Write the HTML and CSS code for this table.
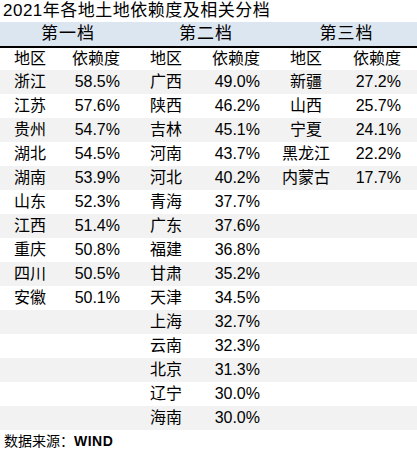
FILE: index.html
```html
<!DOCTYPE html>
<html lang="zh">
<head>
<meta charset="utf-8">
<link rel="stylesheet" href="styles.css">
</head>
<body>
<div class="page">
  <div class="title">2021年各地土地依赖度及相关分档</div>
  <div class="band">
    <div>第一档</div>
    <div>第二档</div>
    <div>第三档</div>
  </div>
  <div class="table">
    <div class="row head"><span class="n">地区</span><span class="v">依赖度</span><span class="n">地区</span><span class="v">依赖度</span><span class="n">地区</span><span class="v">依赖度</span></div>
    <div class="row"><span class="n">浙江</span><span class="v">58.5%</span><span class="n">广西</span><span class="v">49.0%</span><span class="n">新疆</span><span class="v">27.2%</span></div>
    <div class="row"><span class="n">江苏</span><span class="v">57.6%</span><span class="n">陕西</span><span class="v">46.2%</span><span class="n">山西</span><span class="v">25.7%</span></div>
    <div class="row"><span class="n">贵州</span><span class="v">54.7%</span><span class="n">吉林</span><span class="v">45.1%</span><span class="n">宁夏</span><span class="v">24.1%</span></div>
    <div class="row"><span class="n">湖北</span><span class="v">54.5%</span><span class="n">河南</span><span class="v">43.7%</span><span class="n">黑龙江</span><span class="v">22.2%</span></div>
    <div class="row"><span class="n">湖南</span><span class="v">53.9%</span><span class="n">河北</span><span class="v">40.2%</span><span class="n">内蒙古</span><span class="v">17.7%</span></div>
    <div class="row"><span class="n">山东</span><span class="v">52.3%</span><span class="n">青海</span><span class="v">37.7%</span><span class="n"></span><span class="v"></span></div>
    <div class="row"><span class="n">江西</span><span class="v">51.4%</span><span class="n">广东</span><span class="v">37.6%</span><span class="n"></span><span class="v"></span></div>
    <div class="row"><span class="n">重庆</span><span class="v">50.8%</span><span class="n">福建</span><span class="v">36.8%</span><span class="n"></span><span class="v"></span></div>
    <div class="row"><span class="n">四川</span><span class="v">50.5%</span><span class="n">甘肃</span><span class="v">35.2%</span><span class="n"></span><span class="v"></span></div>
    <div class="row"><span class="n">安徽</span><span class="v">50.1%</span><span class="n">天津</span><span class="v">34.5%</span><span class="n"></span><span class="v"></span></div>
    <div class="row"><span class="n"></span><span class="v"></span><span class="n">上海</span><span class="v">32.7%</span><span class="n"></span><span class="v"></span></div>
    <div class="row"><span class="n"></span><span class="v"></span><span class="n">云南</span><span class="v">32.3%</span><span class="n"></span><span class="v"></span></div>
    <div class="row"><span class="n"></span><span class="v"></span><span class="n">北京</span><span class="v">31.3%</span><span class="n"></span><span class="v"></span></div>
    <div class="row"><span class="n"></span><span class="v"></span><span class="n">辽宁</span><span class="v">30.0%</span><span class="n"></span><span class="v"></span></div>
    <div class="row"><span class="n"></span><span class="v"></span><span class="n">海南</span><span class="v">30.0%</span><span class="n"></span><span class="v"></span></div>
  </div>
  <div class="footer">数据来源：<b>WIND</b></div>
</div>
</body>
</html>
```
FILE: styles.css
```css
html, body {
  margin: 0;
  padding: 0;
  background: #ffffff;
}
body {
  font-family: "Liberation Sans", "Noto Sans CJK SC", sans-serif;
  color: #000;
}
.page {
  width: 417px;
}
.title {
  height: 22px;
  line-height: 22px;
  font-size: 17px;
  padding-left: 3px;
  letter-spacing: 0.5px;
  white-space: nowrap;
}
.band {
  display: grid;
  grid-template-columns: 136px 140px 141px;
  height: 24px;
  background: #dce6f1;
  border-bottom: 2px solid #000;
  font-size: 17px;
  line-height: 24px;
  text-align: center;
  letter-spacing: 1px;
}
.row {
  display: grid;
  grid-template-columns: 60px 76px 60px 80px 60px 81px;
  height: 24px;
  align-items: center;
  font-size: 16px;
  line-height: 24px;
}
.row.head {
  height: 22px;
  line-height: 22px;
}
.row:nth-child(even) {
  background: #f2f2f2;
}
.n {
  text-align: center;
  white-space: nowrap;
}
.v {
  text-align: right;
  padding-right: 16px;
  white-space: nowrap;
}
.footer {
  height: 23px;
  line-height: 23px;
  font-size: 14px;
  padding-left: 4px;
}
.footer b {
  font-family: "Liberation Sans", sans-serif;
  font-weight: bold;
  letter-spacing: 0.5px;
}
```
